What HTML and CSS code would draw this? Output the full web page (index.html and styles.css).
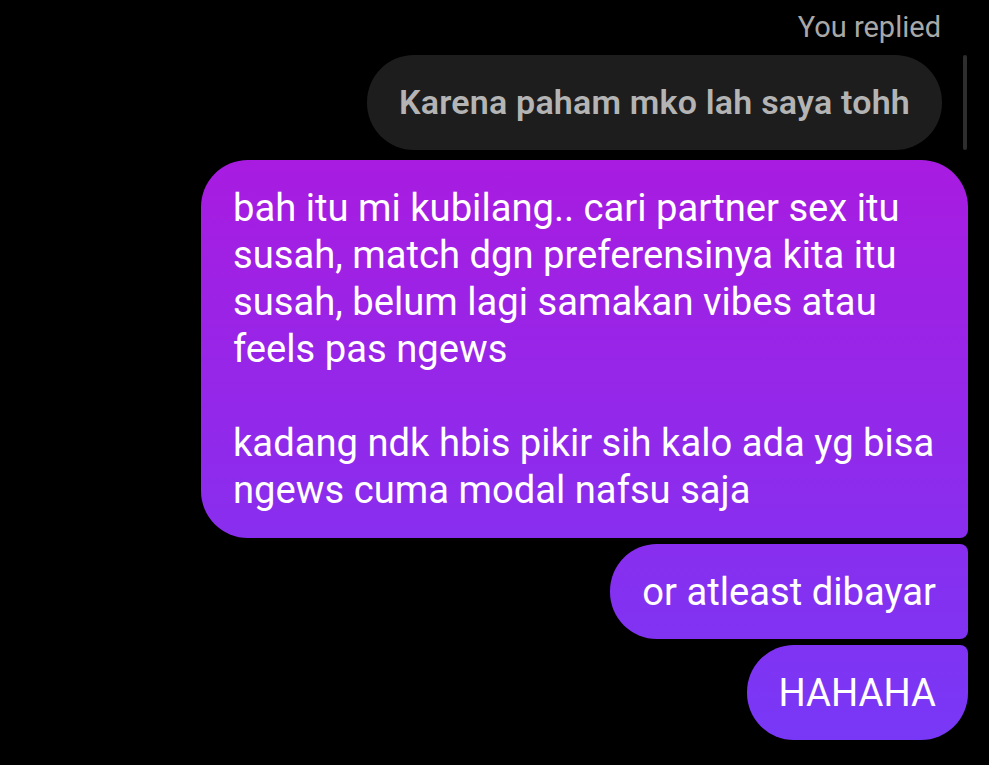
FILE: index.html
```html
<!DOCTYPE html>
<html lang="en">
<head>
    <meta charset="UTF-8">
    <meta name="viewport" content="width=device-width, initial-scale=1.0">
    <title>Chat</title>
    <link rel="stylesheet" href="styles.css">
</head>
<body>
    <div class="thread">
        <div class="reply-label">You replied</div>
        <div class="reply">
            <div class="bubble quoted">Karena paham mko lah saya tohh</div>
            <div class="reply-bar"></div>
        </div>

        <div class="bubble mine first">bah itu mi kubilang.. cari partner sex itu susah, match dgn preferensinya kita itu susah, belum lagi samakan vibes atau feels pas ngews

kadang ndk hbis pikir sih kalo ada yg bisa ngews cuma modal nafsu saja</div>
        <div class="bubble mine middle">or atleast dibayar</div>
        <div class="bubble mine last">HAHAHA</div>
    </div>
</body>
</html>
```

FILE: styles.css
```css
body {
    margin: 0;
    background: #000;
    font-family: Roboto, "Noto Sans", sans-serif;
    height: 100vh;
    overflow: hidden;
}

.thread {
    display: flex;
    flex-direction: column;
    align-items: flex-end;
    padding: 10px 21px 0 0;
}

.reply-label {
    color: #a8a8a8;
    font-size: 29px;
    line-height: 34px;
    margin-right: 27px;
    margin-bottom: 11px;
}

.reply {
    display: flex;
    align-items: stretch;
    margin-bottom: 10px;
}

.reply-bar {
    width: 4px;
    margin-left: 21px;
    margin-right: 1px;
    background: #2e2e2e;
    border-radius: 2px;
}

.bubble {
    box-sizing: border-box;
    border-radius: 47px;
}

.quoted {
    background: #1d1d1d;
    color: #b4b4b4;
    font-size: 34px;
    font-weight: 600;
    letter-spacing: 0.2px;
    line-height: 40px;
    padding: 27px 32px 28px;
}

.mine {
    max-width: 767px;
    padding: 25px 30px 23px 32px;
    color: #fff;
    font-size: 38.2px;
    line-height: 47px;
    white-space: pre-line;
    background: linear-gradient(180deg, #b514da 0%, #7639f7 100%) fixed;
    margin-bottom: 6px;
}

.mine.first {
    padding-bottom: 24px;
    border-bottom-right-radius: 8px;
}

.mine.middle {
    padding-right: 32px;
    border-top-right-radius: 8px;
    border-bottom-right-radius: 8px;
}

.mine.last {
    padding-right: 32px;
    border-top-right-radius: 8px;
}
```
